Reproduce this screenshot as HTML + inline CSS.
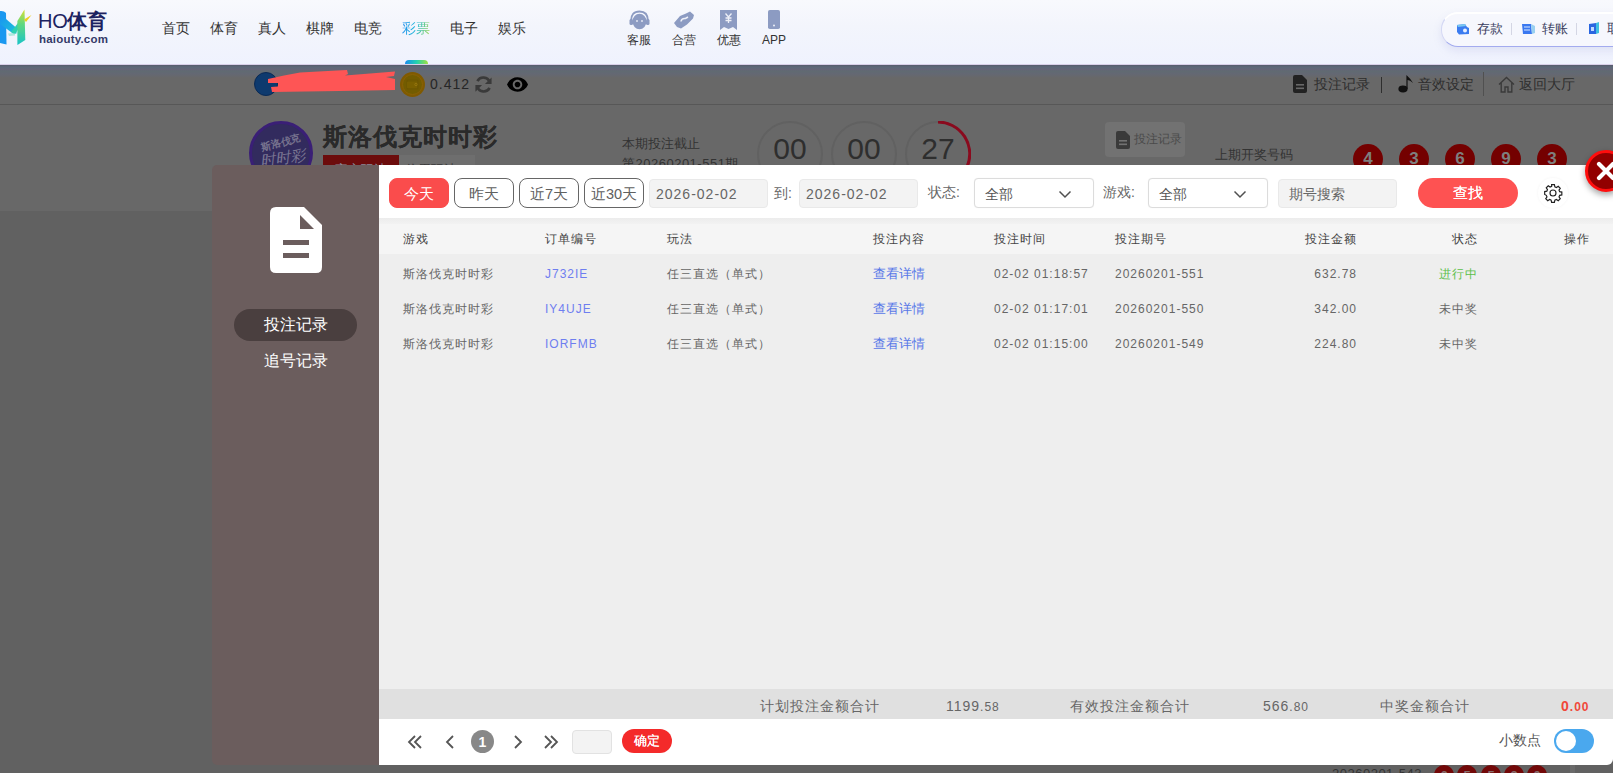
<!DOCTYPE html>
<html><head><meta charset="utf-8">
<style>
*{box-sizing:border-box;margin:0;padding:0}
html,body{width:1613px;height:773px;overflow:hidden}
body{position:relative;font-family:"Liberation Sans",sans-serif;background:#686868;color:#333}
.a{position:absolute;white-space:nowrap}
/* header */
#hdr{position:absolute;left:0;top:0;width:1613px;height:65px;background:linear-gradient(#f8f9fd 0%,#f3f5fc 40%,#eff2fe 100%);z-index:5}
.nav{font-size:14px;color:#333;top:19px;line-height:18px}
.icl{font-size:12px;color:#333;top:33px;line-height:14px;text-align:center;width:40px}
/* bg bar */
#bar{position:absolute;left:0;top:65px;width:1613px;height:40px;background:linear-gradient(#575a6c 0px,#5d6878 2px,#656577 4.5px,#606a72 6px,#646873 9px,#686868 13px);border-bottom:1px solid #575757}
/* modal */
#side{position:absolute;left:212px;top:165px;width:167px;height:600px;background:#6b5d5d;border-radius:5px 0 0 5px}
#main{position:absolute;left:379px;top:165px;width:1234px;height:600px;background:#fff;border-radius:0 6px 6px 0}
.btn{position:absolute;top:13px;height:30px;width:60px;border:1px solid #666;border-radius:8px;font-size:14.5px;line-height:31px;text-align:center;color:#606060}
.inp{position:absolute;top:14px;height:29px;width:119px;background:#f3f3f3;border:1px solid #e9e9e9;border-radius:4px;font-size:14px;line-height:29px;padding-left:6px;color:#666;letter-spacing:1px}
.sel{position:absolute;top:13px;height:30px;width:120px;background:#fff;border:1px solid #dcdcdc;border-radius:4px;box-shadow:0 0 1px rgba(0,0,0,0.08);font-size:14px;line-height:30px;padding-left:10px;color:#555}
.lbl{position:absolute;top:18px;font-size:14px;color:#666;line-height:18px}
.th{position:absolute;font-size:12px;color:#444;letter-spacing:1px;line-height:16px}
.td{position:absolute;font-size:12px;color:#666;letter-spacing:1px;line-height:16px}
.r{text-align:right}
.blue{color:#5878e8}
.sum{position:absolute;top:533px;font-size:14px;color:#666;letter-spacing:1px;line-height:16px}
</style></head><body>

<!-- ===== background page (under overlay) ===== -->
<div id="bar"></div>
<div class="a" style="left:0;top:211px;width:1613px;height:562px;background:#616161"></div>
<!-- user bar -->
<div class="a" style="left:254px;top:72px;width:24px;height:24px;border-radius:12px;background:#0e3a6e;border:1px solid #0a2a55"></div>
<svg class="a" style="left:0;top:0" width="420" height="100" viewBox="0 0 420 100"><path d="M268 79 L284 75.5 L300 72.5 L337 70.5 L347 70 L348 74 L345 75.5 L395 71.5 L394 76 L386 77 L395 79 L395 90 L340 91 L272 92 L271 87 L278 86.5 L278 83 L268 83 Z" fill="#fe5555"/></svg>
<svg class="a" style="left:400px;top:72px" width="25" height="25" viewBox="0 0 25 25"><circle cx="12.5" cy="12.5" r="12.5" fill="#805a00"/><circle cx="12.5" cy="12.5" r="10" fill="#735c00" stroke="#8a6206" stroke-width="1"/><rect x="7" y="8" width="11" height="9" rx="1" fill="none" stroke="#6e5600" stroke-width="1.2"/><rect x="7" y="10" width="10" height="6" fill="#7a6000"/><circle cx="16" cy="12.5" r="1.2" fill="none" stroke="#9a7a10" stroke-width="0.8"/></svg>
<div class="a" style="left:430px;top:76px;font-size:14px;letter-spacing:1px;color:#262626;line-height:16px">0.412</div>
<svg class="a" style="left:474px;top:75px" width="19" height="19" viewBox="0 0 20 20"><path d="M16.5 7.5 A7 7 0 0 0 3.6 6.5 M3.5 12.5 A7 7 0 0 0 16.4 13.5" fill="none" stroke="#3a3a3a" stroke-width="2.8"/><path d="M18.5 2.5 L18.5 9.5 L11.5 9.5 Z M1.5 17.5 L1.5 10.5 L8.5 10.5 Z" fill="#3a3a3a"/></svg>
<svg class="a" style="left:507px;top:77px" width="21" height="15" viewBox="1 4.5 22 15"><path fill="#000" d="M12 4.5C7 4.5 2.73 7.61 1 12c1.73 4.39 6 7.5 11 7.5s9.27-3.11 11-7.5c-1.73-4.39-6-7.5-11-7.5zM12 17c-2.76 0-5-2.24-5-5s2.24-5 5-5 5 2.24 5 5-2.24 5-5 5zm0-8c-1.66 0-3 1.34-3 3s1.34 3 3 3 3-1.34 3-3-1.34-3-3-3z"/></svg>

<svg class="a" style="left:1293px;top:75px" width="14" height="18" viewBox="0 0 14 18"><path d="M2 0 H9 L14 5 V16 Q14 18 12 18 H2 Q0 18 0 16 V2 Q0 0 2 0 Z" fill="#222"/><rect x="3" y="9" width="8" height="1.6" fill="#686868"/><rect x="3" y="12.5" width="8" height="1.6" fill="#686868"/></svg>
<div class="a" style="left:1314px;top:76px;font-size:14px;color:#2e2e2e;line-height:16px">投注记录</div>
<div class="a" style="left:1381px;top:77px;width:1px;height:16px;background:#2e2e2e"></div>
<svg class="a" style="left:1398px;top:74px" width="16" height="19" viewBox="0 0 16 19"><ellipse cx="5" cy="15" rx="4.6" ry="3.4" fill="#111"/><path d="M8.4 15 V1 Q12 4 15 9 Q12 6 9.6 6 V15 Z" fill="#111"/></svg>
<div class="a" style="left:1418px;top:76px;font-size:14px;color:#2e2e2e;line-height:16px">音效设定</div>
<div class="a" style="left:1483px;top:72px;width:1px;height:24px;background:#505050"></div>
<svg class="a" style="left:1498px;top:76px" width="17" height="17" viewBox="0 0 17 17"><path d="M1 8.5 L8.5 1.5 L16 8.5 M3.2 6.8 V16 H7 V11 H10 V16 H13.8 V6.8" fill="none" stroke="#3a3a3a" stroke-width="1.4"/></svg>
<div class="a" style="left:1519px;top:76px;font-size:14px;color:#2e2e2e;line-height:16px">返回大厅</div>

<!-- lottery header -->
<div class="a" style="left:249px;top:121px;width:64px;height:64px;border-radius:32px;background:#322b5e;border:3px solid #3a1f76;overflow:hidden">
  <div class="a" style="left:9px;top:12px;font-size:10px;color:#77738e;transform:rotate(-14deg);font-weight:bold">斯洛伐克</div>
  <div class="a" style="left:8px;top:25px;font-size:15px;color:#7a7692;transform:rotate(-8deg);font-style:italic">时时彩</div>
</div>
<div class="a" style="left:323px;top:123px;font-size:24px;font-weight:bold;color:#2a2a2a;line-height:28px;letter-spacing:1px;text-shadow:0 0 0.6px #2a2a2a">斯洛伐克时时彩</div>
<div class="a" style="left:323px;top:155px;width:76px;height:20px;background:#6c0c0c;overflow:hidden"><div class="a" style="left:12px;top:7px;font-size:13px;color:#8a8a9a;line-height:15px">官方玩法</div></div>
<div class="a" style="left:399px;top:155px;width:76px;height:20px;background:#6e6e6e;overflow:hidden"><div class="a" style="left:6px;top:7px;font-size:13px;color:#3a3a3a;line-height:15px">信用玩法</div></div>
<div class="a" style="left:622px;top:136px;font-size:13px;color:#333;line-height:15px">本期投注截止</div>
<div class="a" style="left:622px;top:156px;font-size:13px;color:#333;line-height:15px;letter-spacing:0.5px">第20260201-551期</div>
<div class="a" style="left:757px;top:121px;width:66px;height:66px;border-radius:33px;border:2px solid #616161"></div>
<div class="a" style="left:831px;top:121px;width:66px;height:66px;border-radius:33px;border:2px solid #616161"></div>
<div class="a" style="left:905px;top:121px;width:66px;height:66px;border-radius:33px;border:2px solid #616161"></div>
<svg class="a" style="left:905px;top:121px" width="66" height="66" viewBox="0 0 66 66"><path d="M33 1 A32 32 0 0 1 62 46" fill="none" stroke="#8a0a1e" stroke-width="3"/></svg>
<div class="a" style="left:757px;top:133px;width:66px;text-align:center;font-size:30px;color:#2e2e2e;line-height:32px">00</div>
<div class="a" style="left:831px;top:133px;width:66px;text-align:center;font-size:30px;color:#2e2e2e;line-height:32px">00</div>
<div class="a" style="left:905px;top:133px;width:66px;text-align:center;font-size:30px;color:#2e2e2e;line-height:32px">27</div>
<div class="a" style="left:1105px;top:122px;width:80px;height:35px;border-radius:4px;background:#727272"></div>
<svg class="a" style="left:1116px;top:131px" width="14" height="18" viewBox="0 0 14 18"><path d="M2 0 H9 L14 5 V16 Q14 18 12 18 H2 Q0 18 0 16 V2 Q0 0 2 0 Z" fill="#3a3a3a"/><rect x="3" y="9" width="8" height="1.6" fill="#727272"/><rect x="3" y="12.5" width="8" height="1.6" fill="#727272"/></svg>
<div class="a" style="left:1134px;top:132px;font-size:12px;color:#4a4a4a;line-height:15px">投注记录</div>
<div class="a" style="left:1215px;top:147px;font-size:13px;color:#333;line-height:15px">上期开奖号码</div>
<div class="a" style="left:1353px;top:144px;width:30px;height:30px;border-radius:15px;background:#740000;color:#7e7e7e;font-weight:bold;font-size:17px;line-height:30px;text-align:center">4</div>
<div class="a" style="left:1399px;top:144px;width:30px;height:30px;border-radius:15px;background:#740000;color:#7e7e7e;font-weight:bold;font-size:17px;line-height:30px;text-align:center">3</div>
<div class="a" style="left:1445px;top:144px;width:30px;height:30px;border-radius:15px;background:#740000;color:#7e7e7e;font-weight:bold;font-size:17px;line-height:30px;text-align:center">6</div>
<div class="a" style="left:1491px;top:144px;width:30px;height:30px;border-radius:15px;background:#740000;color:#7e7e7e;font-weight:bold;font-size:17px;line-height:30px;text-align:center">9</div>
<div class="a" style="left:1537px;top:144px;width:30px;height:30px;border-radius:15px;background:#740000;color:#7e7e7e;font-weight:bold;font-size:17px;line-height:30px;text-align:center">3</div>
<!-- below modal -->
<div class="a" style="left:1332px;top:766px;font-size:13px;color:#333;line-height:15px;letter-spacing:0.5px">20260201-543</div>
<div class="a" style="left:1434px;top:765px;width:20px;height:20px;border-radius:10px;background:#720808;color:#8a7070;font-size:13px;font-weight:bold;line-height:20px;text-align:center;padding-top:1px">6</div>
<div class="a" style="left:1457px;top:765px;width:20px;height:20px;border-radius:10px;background:#720808;color:#8a7070;font-size:13px;font-weight:bold;line-height:20px;text-align:center;padding-top:1px">5</div>
<div class="a" style="left:1481px;top:765px;width:20px;height:20px;border-radius:10px;background:#720808;color:#8a7070;font-size:13px;font-weight:bold;line-height:20px;text-align:center;padding-top:1px">5</div>
<div class="a" style="left:1504px;top:765px;width:20px;height:20px;border-radius:10px;background:#720808;color:#8a7070;font-size:13px;font-weight:bold;line-height:20px;text-align:center;padding-top:1px">2</div>
<div class="a" style="left:1527px;top:765px;width:20px;height:20px;border-radius:10px;background:#720808;color:#8a7070;font-size:13px;font-weight:bold;line-height:20px;text-align:center;padding-top:1px">0</div>
<div class="a" style="left:1570px;top:765px;width:5px;height:8px;background:#6a6a6a"></div>


<!-- ===== header ===== -->
<div id="hdr">
  <svg class="a" style="left:0;top:9px" width="33" height="37" viewBox="0 0 33 37">
    <defs>
      <linearGradient id="lg1" x1="0" y1="0" x2="1" y2="1"><stop offset="0" stop-color="#1896f0"/><stop offset="1" stop-color="#1ec4d8"/></linearGradient>
      <linearGradient id="lg2" x1="0" y1="0" x2="0" y2="1"><stop offset="0" stop-color="#d8e030"/><stop offset="0.4" stop-color="#60d880"/><stop offset="1" stop-color="#18c4c8"/></linearGradient>
    </defs>
    <path d="M0 2 Q4 1.5 6 4 L6.5 35.5 L0 34 Z" fill="#1a98f0"/>
    <path d="M0 9 L6 10 L16.5 19 L16.5 24.5 L13 24.5 L0 15 Z" fill="url(#lg1)"/>
    <path d="M11 23 L18 14 L18.5 20 L15 25 Z" fill="#30d0b0"/>
    <path d="M17.4 12 L24.5 0.6 L25.3 31 L17.4 36 Z" fill="url(#lg2)"/>
    <path d="M24 10.5 L31.5 6 L26 13 Z" fill="#ecd020"/>
    <path d="M8 24.5 L15 24 L15 26.5 L9 27 Z" fill="#80e0c8" opacity="0.6"/>
  </svg>
  <div class="a" style="left:38px;top:10px;font-size:20px;color:#1c2260;line-height:22px;letter-spacing:-0.3px">HO<span style="font-weight:bold">体育</span></div>
  <div class="a" style="left:39px;top:33px;font-size:11.5px;font-weight:bold;color:#343a68;line-height:13px;letter-spacing:0.2px">haiouty.com</div>
  <div class="a nav" style="left:162px">首页</div>
  <div class="a nav" style="left:210px">体育</div>
  <div class="a nav" style="left:258px">真人</div>
  <div class="a nav" style="left:306px">棋牌</div>
  <div class="a nav" style="left:354px">电竞</div>
  <div class="a nav" style="left:402px;color:transparent;background:linear-gradient(100deg,#1a88f0 0%,#20b8d8 50%,#a0d840 100%);-webkit-background-clip:text;background-clip:text">彩票</div>
  <div class="a nav" style="left:450px">电子</div>
  <div class="a nav" style="left:498px">娱乐</div>
  <div class="a" style="left:405px;top:60px;width:23px;height:5px;border-radius:4px 4px 0 0;background:linear-gradient(90deg,#1a8cf0,#22d0b0,#a0e040)"></div>


  <svg class="a" style="left:629px;top:10px" width="21" height="20" viewBox="0 0 21 20"><path d="M2 11 Q2 1.5 10.5 1.5 Q19 1.5 19 11" fill="none" stroke="#8c9bc2" stroke-width="1.8"/><rect x="0.5" y="9" width="3.5" height="6" rx="1.5" fill="#8c9bc2"/><rect x="17" y="9" width="3.5" height="6" rx="1.5" fill="#8c9bc2"/><ellipse cx="10.5" cy="11.5" rx="7" ry="7.8" fill="#8c9bc2"/><circle cx="8" cy="11" r="1" fill="#dfe3f0"/><circle cx="13" cy="11" r="1" fill="#dfe3f0"/></svg>
  <svg class="a" style="left:674px;top:11px" width="20" height="18" viewBox="0 0 20 18"><path d="M0 12 L6 5 L12 2.5 L16 0.5 L20 4 L19 7.5 L13 13.5 L7 17.5 L3 16 Z" fill="#8c9bc2"/><path d="M7 10.5 Q7.5 7 11.5 7.5 L14 6" fill="none" stroke="#eef0f8" stroke-width="1.5"/></svg>
  <svg class="a" style="left:720px;top:10px" width="17" height="20" viewBox="0 0 17 20"><path d="M0 0 H17 V20 L13 17 L8.5 19 L4 17 L0 20 Z" fill="#8c9bc2"/><path d="M5.5 3.5 L8.5 7 L11.5 3.5 M8.5 7 V13 M5.5 8 H11.5 M5.5 10.5 H11.5" fill="none" stroke="#eef0f8" stroke-width="1.3"/></svg>
  <svg class="a" style="left:768px;top:10px" width="12" height="20" viewBox="0 0 12 20"><rect x="0" y="0" width="12" height="19" rx="1.8" fill="#8c9bc2"/><circle cx="6" cy="15.5" r="1" fill="#eef0f8"/></svg>
  <!-- right pill -->
  <div class="a" style="left:1441px;top:12px;width:200px;height:35px;border-radius:17px;background:#f6f7fd;border-top:2px solid #fff;border-bottom:1.5px solid #a3abef;border-left:1px solid #d4d8f4;box-shadow:0 4px 8px rgba(120,130,200,0.15)"></div>
  <svg class="a" style="left:1456px;top:23px" width="14" height="12" viewBox="0 0 14 12"><path d="M1 2 L9 1 L11 4 L13 5 V11 L3 11.5 L1 9 Z" fill="#3b7cf0"/><path d="M1 2 L9 1 L10 3 L2 4 Z" fill="#7ac8f0"/><circle cx="9" cy="7.5" r="2" fill="#e8f0ff"/></svg>
  <div class="a" style="left:1477px;top:21px;font-size:13px;color:#3b4060;line-height:15px">存款</div>
  <div class="a" style="left:1511px;top:23px;width:1px;height:12px;background:#d4d6e4"></div>
  <svg class="a" style="left:1522px;top:23px" width="14" height="12" viewBox="0 0 14 12"><path d="M0 1 L9 1 L10 11 L1 11 Z" fill="#3a78f0"/><path d="M9 1 L13 3 L13 10 L10 11 Z" fill="#9ad0f0"/><path d="M2 4 H8 M2 7 H8" stroke="#d8e8ff" stroke-width="1"/></svg>
  <div class="a" style="left:1542px;top:21px;font-size:13px;color:#3b4060;line-height:15px">转账</div>
  <div class="a" style="left:1576px;top:23px;width:1px;height:12px;background:#d4d6e4"></div>
  <svg class="a" style="left:1589px;top:22px" width="11" height="13" viewBox="0 0 11 13"><path d="M0 2 L7 1 L7 12 L0 12 Z" fill="#2a66e0"/><path d="M7 1 L10 0 L10 11 L7 12 Z" fill="#40c0e0"/><rect x="2" y="5" width="3" height="4" fill="#c0d8ff"/></svg>
  <div class="a" style="left:1607px;top:21px;font-size:13px;color:#3b4060;line-height:15px">取款</div>
  <div class="a" style="left:0;top:64px;width:1613px;height:1px;background:#d8cfe8"></div>
  <div class="a icl" style="left:619px">客服</div>
  <div class="a icl" style="left:664px">合营</div>
  <div class="a icl" style="left:709px">优惠</div>
  <div class="a icl" style="left:754px">APP</div>
</div>

<!-- ===== modal ===== -->
<div id="side">
  <svg class="a" style="left:58px;top:42px" width="52" height="66" viewBox="0 0 52 66">
    <path d="M6 0 H34 L52 18 V60 Q52 66 46 66 H6 Q0 66 0 60 V6 Q0 0 6 0 Z" fill="#fff"/>
    <path d="M30 8 L44 22 H30 Z" fill="#6b5d5d"/>
    <rect x="13" y="33" width="26" height="5" fill="#6b5d5d"/>
    <rect x="13" y="46" width="26" height="5" fill="#6b5d5d"/>
  </svg>
  <div class="a" style="left:22px;top:144px;width:123px;height:32px;border-radius:16px;background:#4a3f3f"></div>
  <div class="a" style="left:0;top:151px;width:167px;text-align:center;font-size:16px;line-height:18px;color:#fff">投注记录</div>
  <div class="a" style="left:0;top:187px;width:167px;text-align:center;font-size:16px;line-height:18px;color:#fff">追号记录</div>
</div>
<div id="main">
  <div class="btn" style="left:10px;background:#fa4c4c;border-color:#fa4c4c;color:#fff">今天</div>
  <div class="btn" style="left:75px">昨天</div>
  <div class="btn" style="left:140px">近7天</div>
  <div class="btn" style="left:205px">近30天</div>
  <div class="inp" style="left:270px">2026-02-02</div>
  <div class="lbl" style="left:395px;top:19px">到:</div>
  <div class="inp" style="left:420px">2026-02-02</div>
  <div class="lbl" style="left:549px">状态:</div>
  <div class="sel" style="left:595px">全部</div>
  <div class="lbl" style="left:724px">游戏:</div>
  <div class="sel" style="left:769px">全部</div>
  <div class="inp" style="left:899px;letter-spacing:0;padding-left:10px">期号搜索</div>
  <div class="a" style="left:1039px;top:13px;width:100px;height:30px;border-radius:15px;background:#fe5252;color:#fff;font-size:15px;line-height:30px;text-align:center;text-shadow:0 0 0.5px #fff">查找</div>


  <!-- chevrons -->
  <svg class="a" style="left:679px;top:25px" width="14" height="9" viewBox="0 0 14 9"><path d="M1.5 1.5 L7 7 L12.5 1.5" fill="none" stroke="#505050" stroke-width="1.5"/></svg>
  <svg class="a" style="left:854px;top:25px" width="14" height="9" viewBox="0 0 14 9"><path d="M1.5 1.5 L7 7 L12.5 1.5" fill="none" stroke="#505050" stroke-width="1.5"/></svg>
  <!-- gear -->
  <div class="a" style="left:1159px;top:13px;width:30px;height:30px;border-radius:15px;box-shadow:0 0 3px rgba(0,0,0,0.05)"></div>
  <svg class="a" style="left:1164px;top:18px" width="20" height="20" viewBox="0 0 24 24"><path fill="none" stroke="#222" stroke-width="1.4" d="M10.3 2h3.4l.5 2.6 1.9.8 2.2-1.5 2.4 2.4-1.5 2.2.8 1.9 2.6.5v3.4l-2.6.5-.8 1.9 1.5 2.2-2.4 2.4-2.2-1.5-1.9.8-.5 2.6h-3.4l-.5-2.6-1.9-.8-2.2 1.5-2.4-2.4 1.5-2.2-.8-1.9L2 13.7v-3.4l2.6-.5.8-1.9-1.5-2.2 2.4-2.4 2.2 1.5 1.9-.8z"/><circle cx="12" cy="12" r="3.6" fill="none" stroke="#222" stroke-width="1.4"/></svg>
  <!-- pagination -->
  <svg class="a" style="left:28px;top:570px" width="16" height="14" viewBox="0 0 16 14"><path d="M8 1 L2 7 L8 13 M14 1 L8 7 L14 13" fill="none" stroke="#555" stroke-width="1.8"/></svg>
  <svg class="a" style="left:66px;top:570px" width="10" height="14" viewBox="0 0 10 14"><path d="M8 1 L2 7 L8 13" fill="none" stroke="#555" stroke-width="1.8"/></svg>
  <div class="a" style="left:92px;top:565px;width:23px;height:23px;border-radius:12px;background:#888;color:#fff;font-size:14px;font-weight:bold;line-height:24px;text-align:center">1</div>
  <svg class="a" style="left:134px;top:570px" width="10" height="14" viewBox="0 0 10 14"><path d="M2 1 L8 7 L2 13" fill="none" stroke="#555" stroke-width="1.8"/></svg>
  <svg class="a" style="left:164px;top:570px" width="16" height="14" viewBox="0 0 16 14"><path d="M2 1 L8 7 L2 13 M8 1 L14 7 L8 13" fill="none" stroke="#555" stroke-width="1.8"/></svg>
  <div class="a" style="left:193px;top:565px;width:40px;height:24px;border-radius:4px;background:#f3f3f3;border:1px solid #e2e2e2"></div>
  <div class="a" style="left:243px;top:564px;width:50px;height:24px;border-radius:12px;background:#f42a2a;color:#fff;font-size:12.5px;line-height:25px;text-align:center;text-shadow:0 0 0.4px #fff">确定</div>
  <div class="a" style="left:1120px;top:566px;font-size:14px;color:#555;line-height:18px">小数点</div>
  <div class="a" style="left:1175px;top:564px;width:40px;height:24px;border-radius:12px;background:#4aa8ee"></div>
  <div class="a" style="left:1177px;top:566px;width:20px;height:20px;border-radius:10px;background:#fff"></div>
  <!-- table -->
  <div class="a" style="left:0;top:53px;width:1234px;height:6px;background:linear-gradient(#ececec,#f2f2f2)"></div>
  <div class="a" style="left:0;top:59px;width:1234px;height:30px;background:#f5f5f5"></div>
  <div class="a" style="left:0;top:89px;width:1234px;height:435px;background:#eeeeee"></div>
  <div class="a" style="left:0;top:524px;width:1234px;height:30px;background:#e0e0e0"></div>

  <div class="th" style="left:24px;top:66px">游戏</div>
  <div class="th" style="left:166px;top:66px">订单编号</div>
  <div class="th" style="left:288px;top:66px">玩法</div>
  <div class="th" style="left:494px;top:66px">投注内容</div>
  <div class="th" style="left:615px;top:66px">投注时间</div>
  <div class="th" style="left:736px;top:66px">投注期号</div>
  <div class="th r" style="right:256px;top:66px">投注金额</div>
  <div class="th r" style="right:135px;top:66px">状态</div>
  <div class="th r" style="right:23px;top:66px">操作</div>
  <div class="td" style="left:24px;top:101px">斯洛伐克时时彩</div>
  <div class="td" style="left:166px;top:101px;color:#6e7ef0">J732IE</div>
  <div class="td" style="left:288px;top:101px">任三直选（单式）</div>
  <div class="td blue" style="left:494px;top:101px;letter-spacing:0;font-size:12.5px">查看详情</div>
  <div class="td" style="left:615px;top:101px">02-02 01:18:57</div>
  <div class="td" style="left:736px;top:101px">20260201-551</div>
  <div class="td r" style="right:256px;top:101px">632.78</div>
  <div class="td r" style="right:135px;top:101px;color:#5cbf4a;">进行中</div>
  <div class="td" style="left:24px;top:136px">斯洛伐克时时彩</div>
  <div class="td" style="left:166px;top:136px;color:#6e7ef0">IY4UJE</div>
  <div class="td" style="left:288px;top:136px">任三直选（单式）</div>
  <div class="td blue" style="left:494px;top:136px;letter-spacing:0;font-size:12.5px">查看详情</div>
  <div class="td" style="left:615px;top:136px">02-02 01:17:01</div>
  <div class="td" style="left:736px;top:136px">20260201-550</div>
  <div class="td r" style="right:256px;top:136px">342.00</div>
  <div class="td r" style="right:135px;top:136px;">未中奖</div>
  <div class="td" style="left:24px;top:171px">斯洛伐克时时彩</div>
  <div class="td" style="left:166px;top:171px;color:#6e7ef0">IORFMB</div>
  <div class="td" style="left:288px;top:171px">任三直选（单式）</div>
  <div class="td blue" style="left:494px;top:171px;letter-spacing:0;font-size:12.5px">查看详情</div>
  <div class="td" style="left:615px;top:171px">02-02 01:15:00</div>
  <div class="td" style="left:736px;top:171px">20260201-549</div>
  <div class="td r" style="right:256px;top:171px">224.80</div>
  <div class="td r" style="right:135px;top:171px;">未中奖</div>

  <div class="sum" style="left:381px">计划投注金额合计</div>
  <div class="sum" style="left:567px;letter-spacing:1px">1199<span style="font-size:12px">.58</span></div>
  <div class="sum" style="left:691px">有效投注金额合计</div>
  <div class="sum" style="left:884px;letter-spacing:1px">566<span style="font-size:12px">.80</span></div>
  <div class="sum" style="left:1001px">中奖金额合计</div>
  <div class="sum" style="left:1182px;letter-spacing:1px;color:#f0483a;font-weight:bold">0<span style="font-size:12px">.00</span></div>
</div>


<!-- close -->
<div class="a" style="left:1585px;top:150px;width:42px;height:42px;border-radius:21px;background:#920000;border:3px solid #ff0d0d;box-shadow:0 3px 6px rgba(0,0,0,0.35);z-index:3"></div>
<svg class="a" style="left:1596px;top:161px;z-index:4" width="20" height="20" viewBox="0 0 20 20"><path d="M3 3 L17 17 M17 3 L3 17" stroke="#fff" stroke-width="4.2" stroke-linecap="round"/></svg>
</body></html>
